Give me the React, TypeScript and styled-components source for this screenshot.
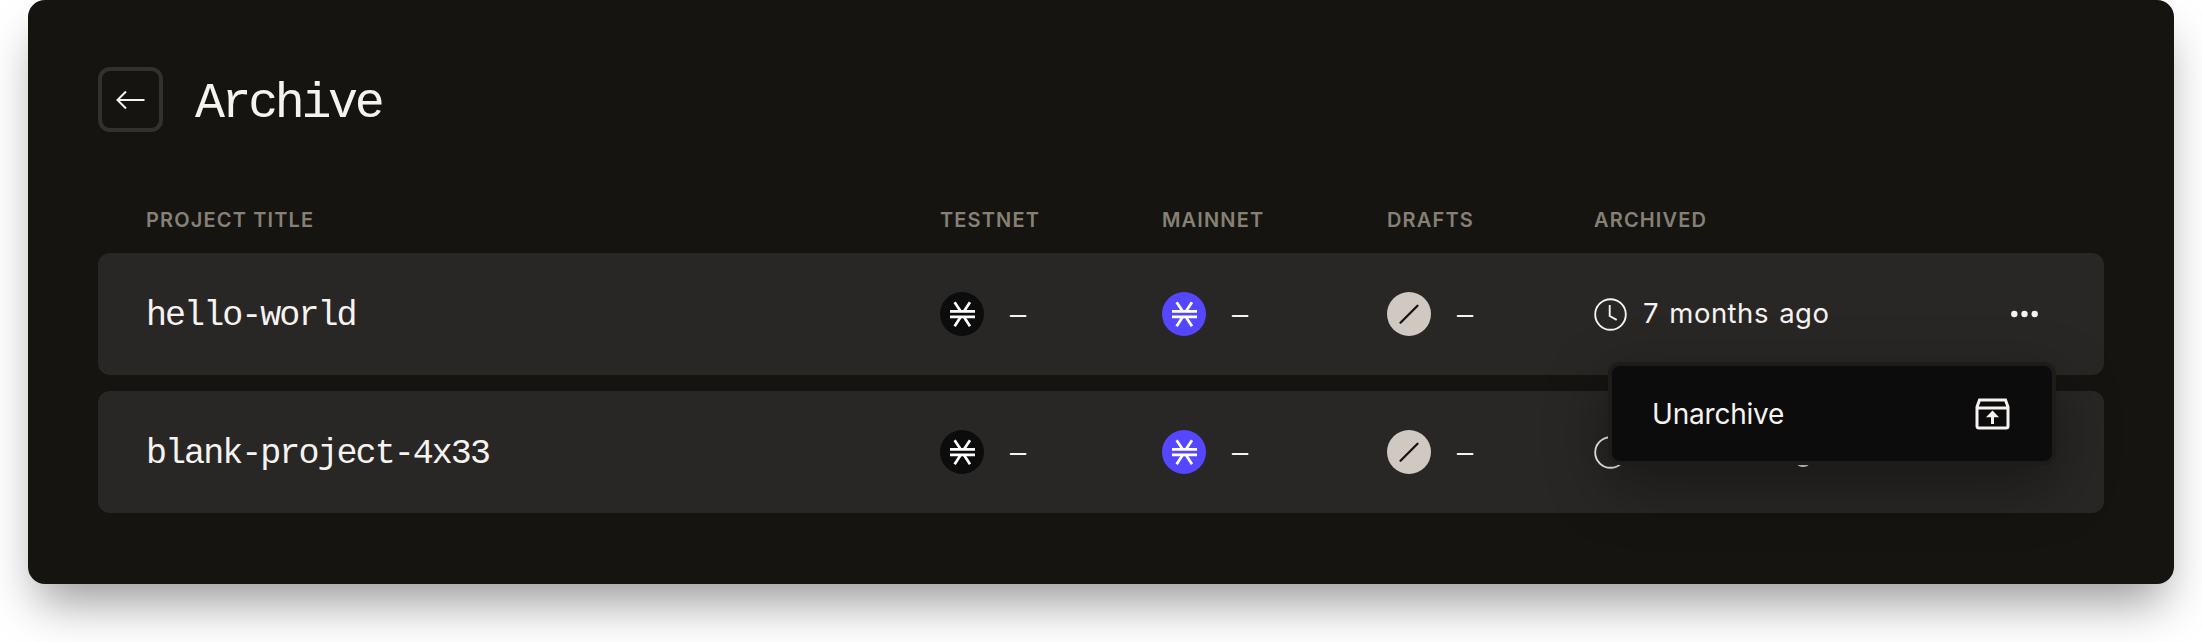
import React from "react";
import styled, { createGlobalStyle } from "styled-components";

const GlobalStyle = createGlobalStyle`
  * { box-sizing: border-box; }
  html, body { margin: 0; padding: 0; background: #fff; }
  body { height: 642px; overflow: hidden; font-family: Inter, "Liberation Sans", sans-serif; color: #f5f2f0; }
`;

const Card = styled.main`
  width: 2146px;
  height: 584px;
  margin: 0 28px;
  padding: 67px 70px 0;
  border-radius: 17px;
  background: #151411;
  box-shadow: 0 28px 48px -10px rgba(0, 0, 0, 0.4);
`;

const Header = styled.header`
  display: flex;
  align-items: center;
  gap: 32px;
  height: 65px;
`;

const BackButton = styled.button`
  display: flex;
  align-items: center;
  justify-content: center;
  width: 65px;
  height: 65px;
  padding: 0;
  border: 4px solid #33312f;
  border-radius: 12px;
  background: transparent;
  color: #f5f2f0;
`;

const Title = styled.h1`
  margin: 0;
  padding-top: 8px;
  font: 400 50px/64px "Liberation Mono", monospace;
  letter-spacing: -3.4px;
`;

const Columns = styled.div`
  display: grid;
  grid-template-columns: 794px 222px 225px 207px 1fr;
  align-items: center;
  padding: 0 0 0 48px;
`;

const TableHead = styled(Columns)`
  height: 24px;
  margin-top: 76px;
  color: #878075;
  font-size: 20px;
  font-weight: 600;
  line-height: 24px;
  letter-spacing: 1.15px;
`;

const Rows = styled.div`
  display: flex;
  flex-direction: column;
  gap: 16px;
  margin-top: 21px;
`;

const Row = styled(Columns)`
  position: relative;
  height: 122px;
  border-radius: 12px;
  background: #282725;
`;

const ProjectName = styled.span`
  padding-top: 4px;
  font: 400 35px/48px "Liberation Mono", monospace;
  letter-spacing: -1.95px;
`;

const Count = styled.span`
  display: flex;
  align-items: center;
  gap: 26px;
`;

const Dash = styled.span`
  font: 400 29px/44px "Liberation Sans", sans-serif;
`;

const Badge = styled.span<{ $bg: string }>`
  display: flex;
  width: 44px;
  height: 44px;
  border-radius: 50%;
  background: ${(p) => p.$bg};
`;

const Archived = styled.span`
  display: flex;
  align-items: center;
  justify-content: space-between;
  padding-right: 66px;
`;

const Age = styled.span`
  display: flex;
  align-items: center;
  gap: 16px;
  font-size: 27.5px;
  line-height: 33px;
  letter-spacing: 0.5px;
  word-spacing: 2px;
`;

const AgeText = styled.span`
  padding-bottom: 2px;
`;

const MoreButton = styled.button`
  display: flex;
  padding: 0;
  border: 0;
  background: none;
  color: #f5f2f0;
`;

const Menu = styled.div`
  position: absolute;
  z-index: 2;
  top: 109px;
  right: 48px;
  width: 448px;
  height: 103px;
  border: 4px solid #1d1c1b;
  border-radius: 12px;
  background: #0c0c0c;
  box-shadow: 0 20px 60px rgba(0, 0, 0, 0.4);
`;

const MenuItem = styled.button`
  display: flex;
  align-items: center;
  justify-content: space-between;
  width: 100%;
  height: 100%;
  padding: 0 42px 0 40px;
  border: 0;
  background: none;
  color: #f5f2f0;
  font: 400 28px/36px Inter, sans-serif;
  letter-spacing: -0.2px;
`;

const ArrowIcon = () => (
  <svg width="30" height="20" viewBox="0 0 30 20" fill="none" stroke="currentColor" strokeWidth="2">
    <path d="M28.5 10h-27M10 1.5 1.5 10l8.5 8.5" />
  </svg>
);

const StacksIcon = () => (
  <svg width="44" height="44" viewBox="0 0 44 44" fill="none" stroke="#fff" strokeWidth="2.7">
    <path d="M10 19.4h25M10 24.8h25" />
    <path d="m14.6 10.3 6 9M30 10.3l-6 9M20.6 25l-6 9.3M24 25l6 9.3" />
  </svg>
);

const DraftIcon = () => (
  <svg width="44" height="44" viewBox="0 0 44 44" fill="none" stroke="#151411" strokeWidth="2.3" strokeLinecap="round">
    <path d="M13.5 30.8 30.5 13.8" />
  </svg>
);

const ClockIcon = () => (
  <svg width="33" height="33" viewBox="0 0 33 33" fill="none" stroke="currentColor" strokeWidth="1.9">
    <circle cx="16.5" cy="16.5" r="15.3" />
    <path d="M15.7 7v11l7 3.8" />
  </svg>
);

const MoreIcon = () => (
  <svg width="27" height="8" viewBox="0 0 27 8" fill="currentColor">
    <circle cx="3.3" cy="4" r="3.2" />
    <circle cx="13.5" cy="4" r="3.2" />
    <circle cx="23.7" cy="4" r="3.2" />
  </svg>
);

const UnarchiveIcon = () => (
  <svg width="35" height="32" viewBox="0 0 35 32" fill="none" stroke="currentColor" strokeWidth="3">
    <path d="M2 9V28a2 2 0 0 0 2 2h27a2 2 0 0 0 2-2V9L30.5 2h-26L2 9ZM3 10h29" />
    <path d="M17.5 26V17" />
    <path d="M17.5 12.5 24 19.2H11Z" fill="currentColor" stroke="none" />
  </svg>
);

const projects = [
  { name: "hello-world", age: "7 months ago", menuOpen: true },
  { name: "blank-project-4x33", age: "7 months ago", menuOpen: false },
];

export default function App() {
  return (
    <>
      <GlobalStyle />
      <Card>
        <Header>
          <BackButton aria-label="Back"><ArrowIcon /></BackButton>
          <Title>Archive</Title>
        </Header>
        <TableHead>
          <span>PROJECT TITLE</span>
          <span>TESTNET</span>
          <span>MAINNET</span>
          <span>DRAFTS</span>
          <span>ARCHIVED</span>
        </TableHead>
        <Rows>
          {projects.map((p) => (
            <Row key={p.name}>
              <ProjectName>{p.name}</ProjectName>
              <Count><Badge $bg="#0c0c0c"><StacksIcon /></Badge><Dash>–</Dash></Count>
              <Count><Badge $bg="#5546ff"><StacksIcon /></Badge><Dash>–</Dash></Count>
              <Count><Badge $bg="#cfc9c2"><DraftIcon /></Badge><Dash>–</Dash></Count>
              <Archived>
                <Age><ClockIcon /><AgeText>{p.age}</AgeText></Age>
                <MoreButton aria-label="More"><MoreIcon /></MoreButton>
              </Archived>
              {p.menuOpen && (
                <Menu>
                  <MenuItem>Unarchive<UnarchiveIcon /></MenuItem>
                </Menu>
              )}
            </Row>
          ))}
        </Rows>
      </Card>
    </>
  );
}
